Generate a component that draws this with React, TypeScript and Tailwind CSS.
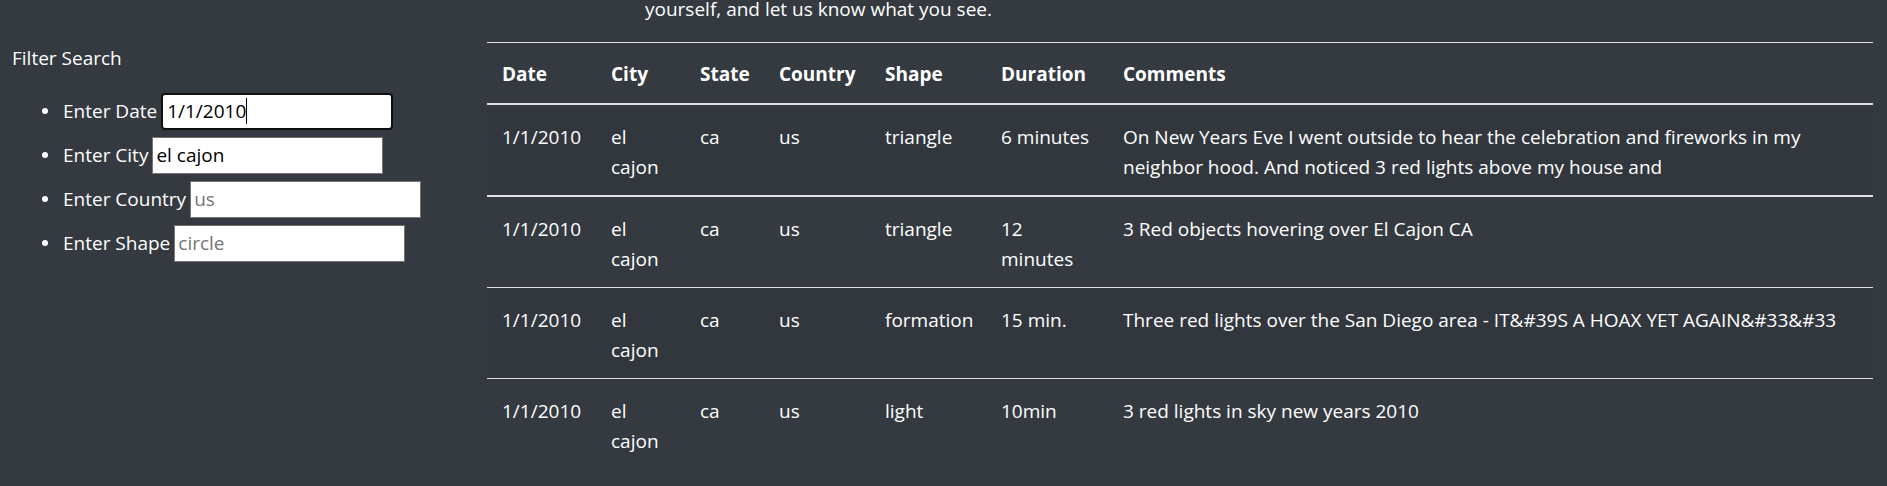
import React from "react";

const sightings = [
  {
    date: "1/1/2010",
    city: "el cajon",
    state: "ca",
    country: "us",
    shape: "triangle",
    duration: "6 minutes",
    comments:
      "On New Years Eve I went outside to hear the celebration and fireworks in my neighbor hood. And noticed 3 red lights above my house and",
  },
  {
    date: "1/1/2010",
    city: "el cajon",
    state: "ca",
    country: "us",
    shape: "triangle",
    duration: "12 minutes",
    comments: "3 Red objects hovering over El Cajon CA",
  },
  {
    date: "1/1/2010",
    city: "el cajon",
    state: "ca",
    country: "us",
    shape: "formation",
    duration: "15 min.",
    comments:
      "Three red lights over the San Diego area - IT&#39S A HOAX YET AGAIN&#33&#33",
  },
  {
    date: "1/1/2010",
    city: "el cajon",
    state: "ca",
    country: "us",
    shape: "light",
    duration: "10min",
    comments: "3 red lights in sky new years 2010",
  },
];

const columns = [
  { label: "Date", width: "w-[109px]" },
  { label: "City", width: "w-[89px]" },
  { label: "State", width: "w-[79px]" },
  { label: "Country", width: "w-[106px]" },
  { label: "Shape", width: "w-[116px]" },
  { label: "Duration", width: "w-[122px]" },
  { label: "Comments", width: "" },
];

// top border of each body row
const rowBorders = ["", "border-t-2", "border-t", "border-t"];
const rowBg = ["bg-[#31373d]", "", "bg-[#31373d]", ""];

function Bullet() {
  return <span className="ml-[30px] mr-[15px] w-[6px] h-[6px] rounded-full bg-white shrink-0" />;
}

function FilterField({ label, value, placeholder }: { label: string; value?: string; placeholder?: string }) {
  return (
    <li className="flex items-center h-[44px]">
      <Bullet />
      <span>{label}</span>
      <input
        readOnly
        value={value}
        placeholder={placeholder}
        className="ml-[4px] w-[231px] h-[37px] bg-white border border-[#767676] px-[3px] text-black placeholder:text-[#757575] outline-none"
      />
    </li>
  );
}

export default function App() {
  return (
    <div className="min-h-screen bg-[#343a40] text-white font-['Open_Sans',sans-serif] text-[19px] leading-[30px] flex overflow-hidden">
      {/* Filter panel */}
      <aside className="w-[487px] shrink-0 pl-3 pt-[43px]">
        <p>Filter Search</p>
        <ul className="mt-[16px]">
          <li className="flex items-center h-[44px]">
            <Bullet />
            <span>Enter Date</span>
            <div className="ml-[4px] w-[232px] h-[37px] bg-white border-2 border-[#101010] rounded-[4px] pl-[4px] flex items-center text-black">
              <span>1/1/2010</span>
              <span className="w-px h-[26px] bg-black" />
            </div>
          </li>
          <FilterField label="Enter City" value="el cajon" />
          <FilterField label="Enter Country" placeholder="us" />
          <FilterField label="Enter Shape" placeholder="circle" />
        </ul>
      </aside>

      {/* Results */}
      <main className="flex-1 pr-[14px]">
        <p className="-mt-[6px] mb-[18px] pl-[158px]">yourself, and let us know what you see.</p>
        <table className="w-full table-fixed border-collapse">
          <thead>
            <tr className="border-t border-b-2 border-[#dee2e6]">
              {columns.map((col) => (
                <th key={col.label} className={`${col.width} px-[15px] pt-[16px] pb-[14px] text-left font-bold align-bottom`}>
                  {col.label}
                </th>
              ))}
            </tr>
          </thead>
          <tbody>
            {sightings.map((s, i) => (
              <tr key={i} className={`${rowBorders[i]} ${rowBg[i]} border-[#dee2e6]`}>
                <td className="px-[15px] pt-[17px] pb-[13px] align-top">{s.date}</td>
                <td className="px-[15px] pt-[17px] pb-[13px] align-top">{s.city}</td>
                <td className="px-[15px] pt-[17px] pb-[13px] align-top">{s.state}</td>
                <td className="px-[15px] pt-[17px] pb-[13px] align-top">{s.country}</td>
                <td className="px-[15px] pt-[17px] pb-[13px] align-top">{s.shape}</td>
                <td className="px-[15px] pt-[17px] pb-[13px] align-top">{s.duration}</td>
                <td className="px-[15px] pt-[17px] pb-[13px] align-top">{s.comments}</td>
              </tr>
            ))}
          </tbody>
        </table>
      </main>
    </div>
  );
}
